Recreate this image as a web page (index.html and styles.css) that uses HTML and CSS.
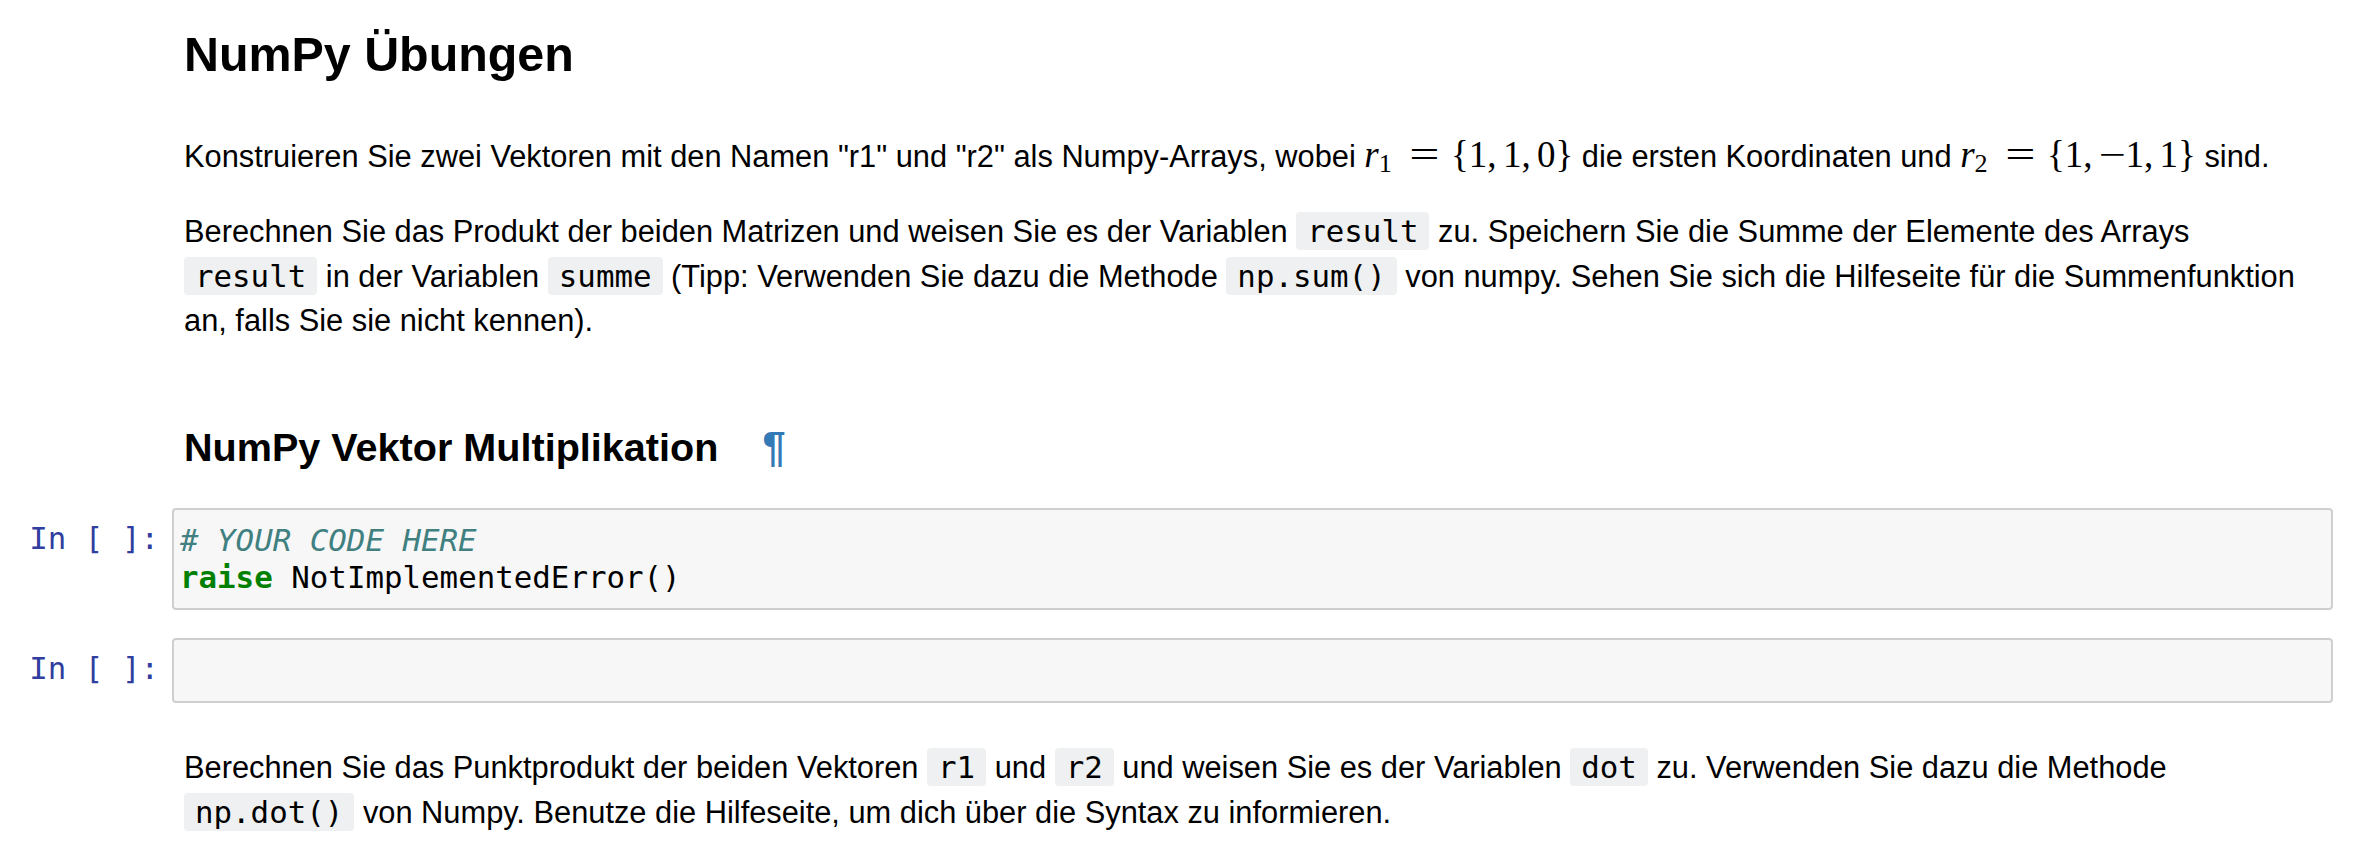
FILE: index.html
```html
<!DOCTYPE html>
<html lang="de">
<head>
<meta charset="utf-8">
<title>NumPy Übungen</title>
<link rel="stylesheet" href="styles.css">
</head>
<body>
<div class="notebook">
  <div class="cell">
    <div class="prompt"></div>
    <div class="md">
      <h2 class="title">NumPy Übungen</h2>
      <p class="p1">Konstruieren Sie zwei Vektoren mit den Namen "r1" und "r2" als Numpy-Arrays, wobei <span class="math"><span class="mi">r</span><sub class="msub">1</sub><span class="mo">=</span><span class="mn">{1,<span class="th"></span>1,<span class="th"></span>0}</span></span> die ersten Koordinaten und <span class="math"><span class="mi">r</span><sub class="msub">2</sub><span class="mo">=</span><span class="mn">{1,<span class="th"></span><span class="minus">−</span>1,<span class="th"></span>1}</span></span> sind.</p>
      <p class="p2">Berechnen Sie das Produkt der beiden Matrizen und weisen Sie es der Variablen <code>result</code> zu. Speichern Sie die Summe der Elemente des Arrays <code>result</code> in der Variablen <code>summe</code> (Tipp: Verwenden Sie dazu die Methode <code>np.sum()</code> von numpy. Sehen Sie sich die Hilfeseite für die Summenfunktion an, falls Sie sie nicht kennen).</p>
    </div>
  </div>

  <div class="cell">
    <div class="prompt"></div>
    <div class="md">
      <h3 class="section">NumPy Vektor Multiplikation<a class="anchor" href="#">¶</a></h3>
    </div>
  </div>

  <div class="cell code-cell first">
    <div class="prompt in">In&nbsp;[&nbsp;]:</div>
    <div class="input"><pre class="code"><span class="cm"># YOUR CODE HERE</span>
<span class="kw">raise</span> NotImplementedError()</pre></div>
  </div>

  <div class="cell code-cell second">
    <div class="prompt in">In&nbsp;[&nbsp;]:</div>
    <div class="input"><pre class="code"> </pre></div>
  </div>

  <div class="cell">
    <div class="prompt"></div>
    <div class="md">
      <p class="p3">Berechnen Sie das Punktprodukt der beiden Vektoren <code>r1</code> und <code>r2</code> und weisen Sie es der Variablen <code>dot</code> zu. Verwenden Sie dazu die Methode <code>np.dot()</code> von Numpy. Benutze die Hilfeseite, um dich über die Syntax zu informieren.</p>
    </div>
  </div>
</div>
</body>
</html>
```

FILE: styles.css
```css
html, body {
  margin: 0;
  padding: 0;
  background: #ffffff;
}

body {
  font-family: "Liberation Sans", Arial, Helvetica, sans-serif;
  color: #000000;
}

.notebook {
  padding: 28px 29px 0 0;
}

.cell {
  display: flex;
  align-items: flex-start;
}

.prompt {
  flex: none;
  width: 172px;
  box-sizing: border-box;
  padding-right: 13px;
  text-align: right;
}

.prompt.in {
  padding-top: 11.6px;
  font-family: "DejaVu Sans Mono", "Liberation Mono", monospace;
  font-size: 30.8px;
  line-height: 37.4px;
  color: #303f9f;
}

.md {
  flex: 1;
  min-width: 0;
  padding: 0 12px;
}

.title {
  margin: 0;
  font-size: 48.4px;
  line-height: 53.2px;
  font-weight: bold;
}

p {
  margin: 0;
  font-size: 30.8px;
  line-height: 44px;
}

.p1 {
  margin-top: 52px;
}

.p2 {
  margin-top: 30px;
}

.section {
  margin: 82px 0 0 0;
  font-size: 39.6px;
  line-height: 44px;
  font-weight: bold;
}

.anchor {
  margin-left: 44px;
  color: #337ab7;
  text-decoration: none;
  font-size: 1.05em;
}

.code-cell.first {
  margin-top: 38.8px;
}

.code-cell.second {
  margin-top: 28px;
}

.input {
  flex: 1;
  min-width: 0;
  border: 2px solid #cfcfcf;
  border-radius: 4px;
  background: #f7f7f7;
  padding: 11.6px 6px;
}

.code {
  margin: 0;
  font-family: "DejaVu Sans Mono", "Liberation Mono", monospace;
  font-size: 30.8px;
  line-height: 37.4px;
  color: #000000;
  white-space: pre;
}

.cm {
  color: #408080;
  font-style: italic;
}

.kw {
  color: #008000;
  font-weight: bold;
}

.p3 {
  margin-top: 42.4px;
}

code {
  font-family: "DejaVu Sans Mono", "Liberation Mono", monospace;
  font-size: 30.8px;
  background: #eff0f1;
  border-radius: 4px;
  padding: 1px 11px;
}

.math {
  font-family: "Liberation Serif", "Times New Roman", serif;
  font-size: 37px;
  white-space: nowrap;
}

.mi {
  font-style: italic;
}

.msub {
  font-size: 0.707em;
  vertical-align: -0.18em;
  line-height: 0;
}

.mo {
  display: inline-block;
  margin: 0 0.44em 0 0.6em;
  transform: scaleX(1.45);
}

.th {
  display: inline-block;
  width: 0.17em;
}

.minus {
  display: inline-block;
  transform: scaleX(1.3);
  margin: 0 0.08em;
}
```
